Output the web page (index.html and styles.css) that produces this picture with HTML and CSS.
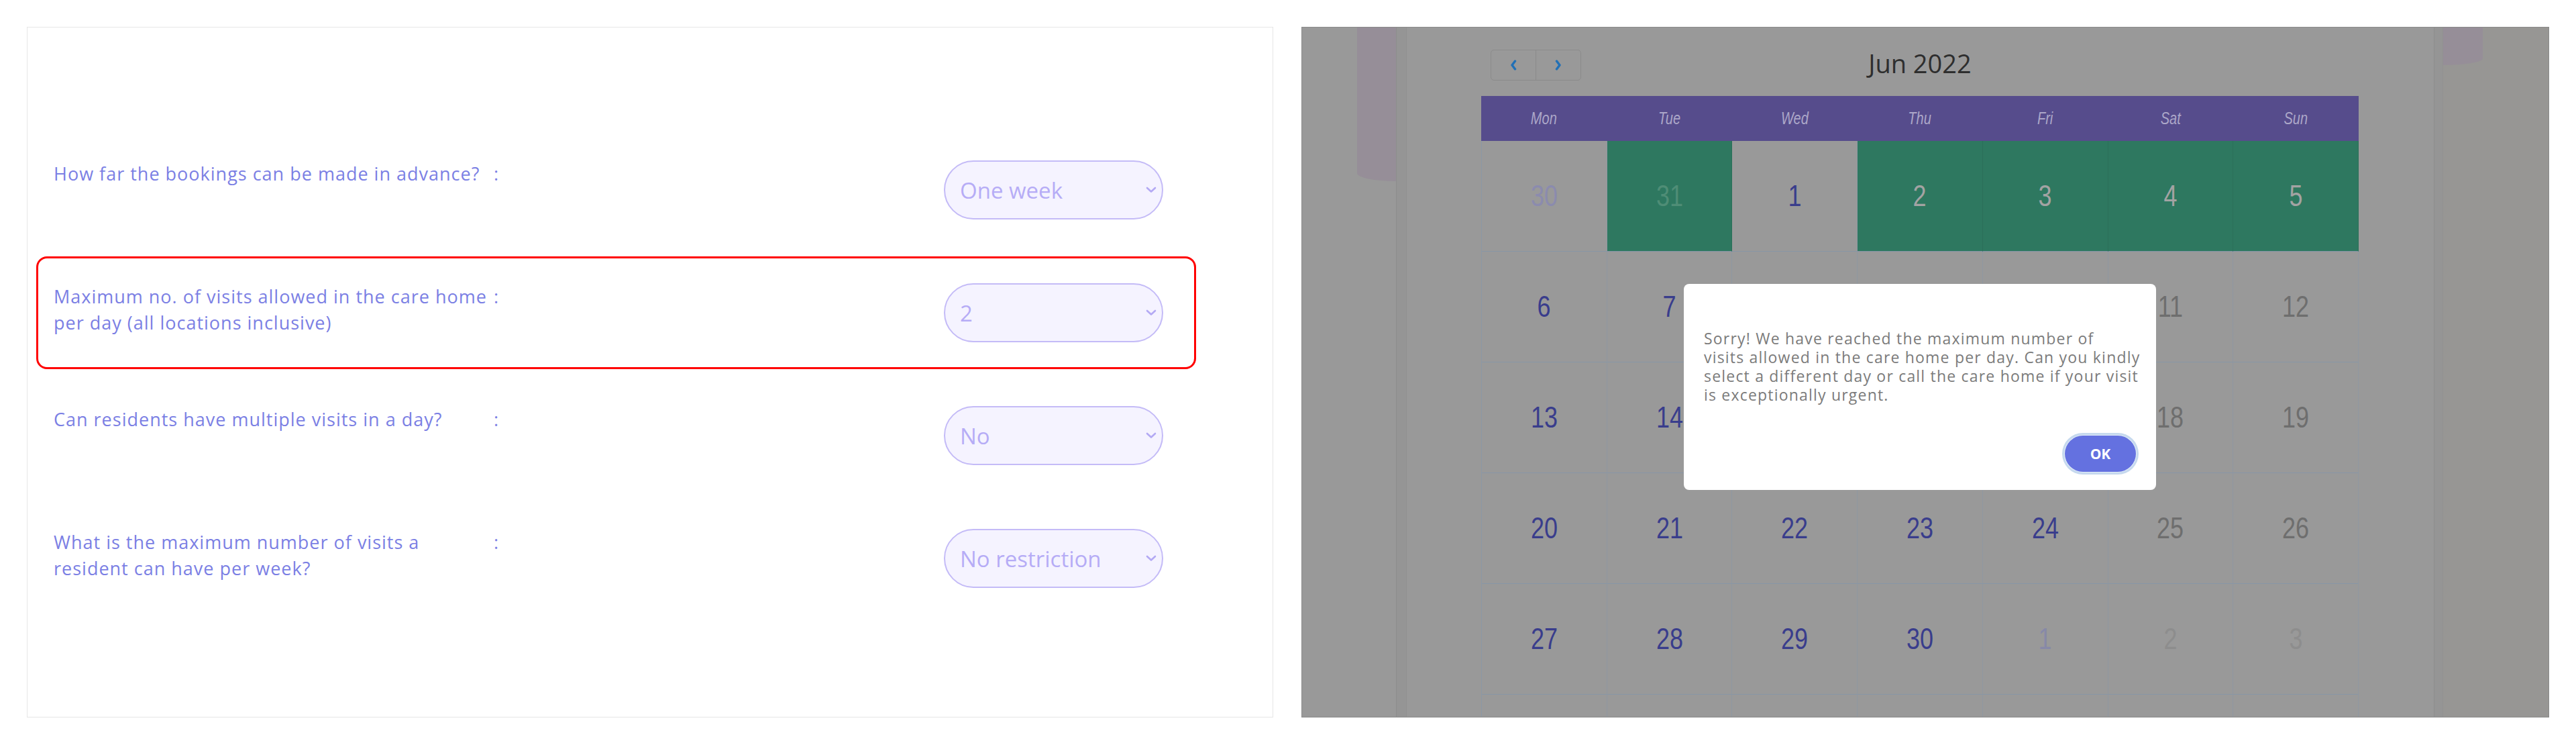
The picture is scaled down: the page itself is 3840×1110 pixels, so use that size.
FILE: index.html
```html
<!DOCTYPE html>
<html lang="en">
<head>
<meta charset="utf-8">
<title>Visit settings</title>
<link rel="stylesheet" href="styles.css">
</head>
<body>
  <section class="panel panel-form">
    <div class="row">
      <div class="label">How far the bookings can be made in advance?</div>
      <div class="colon">:</div>
      <div class="select"><span>One week</span><svg class="chev" width="16" height="10" viewBox="0 0 16 10"><path d="M2 2 L8 7.5 L14 2" fill="none" stroke="#b3a9f4" stroke-width="2.6" stroke-linecap="round" stroke-linejoin="round"/></svg></div>
    </div>
    <div class="row is-flagged">
      <div class="label">Maximum no. of visits allowed in the care home per day (all locations inclusive)</div>
      <div class="colon">:</div>
      <div class="select"><span>2</span><svg class="chev" width="16" height="10" viewBox="0 0 16 10"><path d="M2 2 L8 7.5 L14 2" fill="none" stroke="#b3a9f4" stroke-width="2.6" stroke-linecap="round" stroke-linejoin="round"/></svg></div>
    </div>
    <div class="row">
      <div class="label">Can residents have multiple visits in a day?</div>
      <div class="colon">:</div>
      <div class="select"><span>No</span><svg class="chev" width="16" height="10" viewBox="0 0 16 10"><path d="M2 2 L8 7.5 L14 2" fill="none" stroke="#b3a9f4" stroke-width="2.6" stroke-linecap="round" stroke-linejoin="round"/></svg></div>
    </div>
    <div class="row">
      <div class="label">What is the maximum number of visits a resident can have per week?</div>
      <div class="colon">:</div>
      <div class="select"><span>No restriction</span><svg class="chev" width="16" height="10" viewBox="0 0 16 10"><path d="M2 2 L8 7.5 L14 2" fill="none" stroke="#b3a9f4" stroke-width="2.6" stroke-linecap="round" stroke-linejoin="round"/></svg></div>
    </div>
  </section>

  <section class="panel panel-cal">
    <div class="side side-l"><div class="blob blob-l"></div></div>
    <div class="band"></div>
    <div class="main">
      <div class="calendar">
        <div class="toolbar">
          <div class="nav">
            <button class="nav-btn" aria-label="Previous month"><svg width="10" height="16" viewBox="0 0 10 16"><path d="M7.5 2 L3 8 L7.5 14" fill="none" stroke="#2170b6" stroke-width="3.4" stroke-linecap="round" stroke-linejoin="round"/></svg></button>
            <button class="nav-btn" aria-label="Next month"><svg width="10" height="16" viewBox="0 0 10 16"><path d="M2.5 2 L7 8 L2.5 14" fill="none" stroke="#2170b6" stroke-width="3.4" stroke-linecap="round" stroke-linejoin="round"/></svg></button>
          </div>
          <h2 class="title">Jun 2022</h2>
          <div></div>
        </div>
        <div class="dow">
          <span><i>Mon</i></span><span><i>Tue</i></span><span><i>Wed</i></span><span><i>Thu</i></span><span><i>Fri</i></span><span><i>Sat</i></span><span><i>Sun</i></span>
        </div>
        <div class="days">
          <div class="day prev"><span>30</span></div>
          <div class="day avail muted"><span>31</span></div>
          <div class="day"><span>1</span></div>
          <div class="day avail"><span>2</span></div>
          <div class="day avail"><span>3</span></div>
          <div class="day avail"><span>4</span></div>
          <div class="day avail"><span>5</span></div>

          <div class="day"><span>6</span></div>
          <div class="day"><span>7</span></div>
          <div class="day"><span>8</span></div>
          <div class="day"><span>9</span></div>
          <div class="day"><span>10</span></div>
          <div class="day off"><span>11</span></div>
          <div class="day off"><span>12</span></div>

          <div class="day"><span>13</span></div>
          <div class="day"><span>14</span></div>
          <div class="day"><span>15</span></div>
          <div class="day"><span>16</span></div>
          <div class="day"><span>17</span></div>
          <div class="day off"><span>18</span></div>
          <div class="day off"><span>19</span></div>

          <div class="day"><span>20</span></div>
          <div class="day"><span>21</span></div>
          <div class="day"><span>22</span></div>
          <div class="day"><span>23</span></div>
          <div class="day"><span>24</span></div>
          <div class="day off"><span>25</span></div>
          <div class="day off"><span>26</span></div>

          <div class="day"><span>27</span></div>
          <div class="day"><span>28</span></div>
          <div class="day"><span>29</span></div>
          <div class="day"><span>30</span></div>
          <div class="day next"><span>1</span></div>
          <div class="day next faint"><span>2</span></div>
          <div class="day next faint"><span>3</span></div>

          <div class="day"></div>
          <div class="day"></div>
          <div class="day"></div>
          <div class="day"></div>
          <div class="day"></div>
          <div class="day"></div>
          <div class="day"></div>
        </div>
      </div>
    </div>
    <div class="band band-r"></div>
    <div class="side side-r"><div class="blob blob-r"></div></div>

    <div class="modal" role="dialog">
      <p>Sorry! We have reached the maximum number of<br>visits allowed in the care home per day. Can you kindly<br>select a different day or call the care home if your visit<br>is exceptionally urgent.</p>
      <div class="modal-actions"><button class="ok">OK</button></div>
    </div>
  </section>
</body>
</html>
```

FILE: styles.css
```css
html, body {
  margin: 0;
}

body {
  box-sizing: border-box;
  height: 1110px;
  padding: 40px 40px 41px;
  display: flex;
  gap: 42px;
  background: #ffffff;
  font-family: "Open Sans", "Noto Sans", sans-serif;
}

/* ---------- left: settings form ---------- */
.panel-form {
  width: 1858px;
  flex: none;
  box-sizing: border-box;
  border: 1px solid #e6e6e6;
  padding: 158px 114px 0 13px;
}

.row {
  display: flex;
  align-items: flex-start;
  border: 3px solid transparent;
  border-radius: 16px;
  padding: 37px 23px;
  margin-bottom: 15px;
}

.row.is-flagged {
  border-color: #ff0000;
}

.label {
  width: 656px;
  flex: none;
  font-size: 27px;
  line-height: 39px;
  letter-spacing: 1px;
  color: #7b7fe4;
}

.colon {
  font-size: 27px;
  line-height: 39px;
  color: #7b7fe4;
}

.select {
  margin-left: auto;
  margin-right: 23px;
  width: 327px;
  height: 88px;
  box-sizing: border-box;
  border: 2px solid #c4bbf7;
  border-radius: 44px;
  background: #f5f3ff;
  display: flex;
  align-items: center;
  justify-content: space-between;
  padding: 0 8px 0 22px;
  font-size: 33px;
  color: #b6acf6;
}

.chev {
  display: block;
}

/* ---------- right: calendar under modal backdrop ---------- */
.panel-cal {
  flex: 1;
  position: relative;
  display: flex;
  border: 1px solid #8a8a8a;
  background: #999999;
  overflow: hidden;
}

.side-l {
  width: 140px;
  flex: none;
}

.blob {
  background: #968e98;
}

.blob-l {
  margin-left: 82px;
  width: 58px;
  height: 229px;
  border-bottom-left-radius: 100% 12px;
}

.band {
  width: 16px;
  flex: none;
  box-sizing: border-box;
  background: #959595;
  border-left: 1px solid #8d8d8d;
  border-right: 1px solid #919191;
}

.band-r {
  width: 14px;
}

.side-r {
  width: 157px;
  flex: none;
  background: #979694;
}

.blob-r {
  width: 59px;
  height: 56px;
  border-bottom-right-radius: 100% 10px;
}

.main {
  flex: 1;
  min-width: 0;
  padding: 33px 112px 0 111px;
}

.toolbar {
  display: grid;
  grid-template-columns: 1fr auto 1fr;
  align-items: start;
  height: 46px;
}

.nav {
  display: flex;
  margin-left: 14px;
  width: 135px;
  height: 46px;
  box-sizing: border-box;
  border: 1px solid #8b8b8b;
  border-radius: 5px;
}

.nav-btn {
  flex: 1;
  display: flex;
  align-items: center;
  justify-content: center;
  padding: 0;
  border: 0;
  background: transparent;
}

.nav-btn + .nav-btn {
  border-left: 1px solid #8b8b8b;
}

.title {
  margin: 0;
  font-size: 38px;
  font-weight: 400;
  line-height: 40px;
  color: #2e2e2e;
}

.dow {
  display: grid;
  grid-template-columns: repeat(7, 1fr);
  margin-top: 23px;
  height: 67px;
  background: #564c8c;
}

.dow span {
  display: flex;
  align-items: center;
  justify-content: center;
  font-family: "Liberation Sans", sans-serif;
  font-size: 25px;
  color: #aca7c8;
}

.dow i {
  display: inline-block;
  font-style: italic;
  transform: scaleX(0.8);
}

.days {
  display: grid;
  grid-template-columns: repeat(7, 1fr);
  grid-auto-rows: 165px;
  border-left: 1px solid #8c98a5;
}

.day {
  display: flex;
  align-items: center;
  justify-content: center;
  border-right: 1px solid #8f97a1;
  border-bottom: 1px solid #8796a6;
  font-family: "Liberation Sans", sans-serif;
  font-size: 45px;
  color: #393d8c;
}

.day span {
  display: inline-block;
  transform: scaleX(0.8);
}

.day.off {
  color: #6e6e6e;
}

.day.prev {
  color: #8b8bae;
}

.day.next {
  color: #8789a8;
}

.day.next.faint {
  color: #8d8d8d;
}

.day.avail {
  background: #2e7860;
  border-right-color: #2b6f59;
  color: #a3a3a3;
}

.day.avail.muted {
  color: #4f8d76;
}

/* ---------- modal ---------- */
.modal {
  position: absolute;
  left: 569px;
  top: 382px;
  width: 704px;
  box-sizing: border-box;
  padding: 67px 30px 27px;
  background: #ffffff;
  border-radius: 8px;
}

.modal p {
  margin: 0;
  font-size: 23px;
  line-height: 28px;
  letter-spacing: 1.2px;
  color: #7b7b7b;
  white-space: nowrap;
}

.modal-actions {
  display: flex;
  justify-content: flex-end;
  margin-top: 47px;
}

.ok {
  width: 106px;
  height: 54px;
  padding: 0;
  border: 0;
  border-radius: 27px;
  background: #6471e0;
  color: #ffffff;
  font-family: "Open Sans", sans-serif;
  font-weight: 700;
  font-size: 21px;
  box-shadow: 0 0 0 1px #e4eef9, 0 0 0 4px #c6d9ee;
}
```
